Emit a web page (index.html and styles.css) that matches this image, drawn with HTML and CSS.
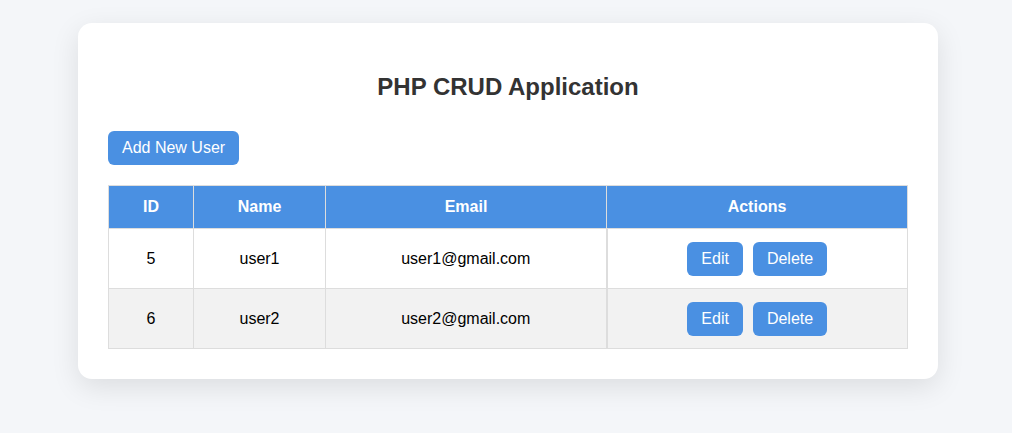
FILE: index.html
```html
<!DOCTYPE html>
<html lang="en">
<head>
<meta charset="UTF-8">
<title>PHP CRUD Application</title>
<link rel="stylesheet" href="styles.css">
</head>
<body>
<div class="container">
  <h2 class="title">PHP CRUD Application</h2>
  <a href="#" class="btn btn-add">Add New User</a>
  <table class="users">
    <thead>
      <tr>
        <th class="col-id">ID</th>
        <th class="col-name">Name</th>
        <th class="col-email">Email</th>
        <th class="col-actions">Actions</th>
      </tr>
    </thead>
    <tbody>
      <tr>
        <td>5</td>
        <td>user1</td>
        <td>user1@gmail.com</td>
        <td class="actions"><a href="#" class="btn">Edit</a><a href="#" class="btn">Delete</a></td>
      </tr>
      <tr class="alt">
        <td>6</td>
        <td>user2</td>
        <td>user2@gmail.com</td>
        <td class="actions"><a href="#" class="btn">Edit</a><a href="#" class="btn">Delete</a></td>
      </tr>
    </tbody>
  </table>
</div>
</body>
</html>
```

FILE: styles.css
```css
html, body {
  margin: 0;
  padding: 0;
}
html {
  background: #f4f6f9;
}
body {
  min-height: 433px;
  box-sizing: border-box;
  font-family: "Liberation Sans", Arial, sans-serif;
  color: #000;
  padding: 23px 74px 0 78px;
}
.container {
  width: 800px;
  margin: 0 auto;
  background: #fff;
  padding: 30px;
  border-radius: 14px;
  box-shadow: 0 8px 28px rgba(0, 0, 0, 0.1);
}
.title {
  margin: 20px 0 30px;
  text-align: center;
  font-size: 24px;
  line-height: 28px;
  color: #333;
}
.btn {
  display: inline-block;
  background: #4a90e2;
  color: #fff;
  text-decoration: none;
  font-size: 16px;
  line-height: normal;
  padding: 8px 14px;
  border-radius: 6px;
}
.btn-add {
  margin-bottom: 20px;
}
.users {
  width: 800px;
  border-collapse: collapse;
  table-layout: fixed;
}
.users th, .users td {
  border: 1px solid #ddd;
  text-align: center;
  font-size: 16px;
  line-height: normal;
  padding: 12px;
}
.users th {
  background: #4a90e2;
  color: #fff;
  font-weight: bold;
}
.col-id { width: 60px; }
.col-name { width: 107px; }
.col-email { width: 256px; }
.users tr.alt td {
  background: #f2f2f2;
}
.users td.actions {
  border-left-width: 2px;
  padding-top: 13px;
}
.actions .btn + .btn {
  margin-left: 10px;
}
```
